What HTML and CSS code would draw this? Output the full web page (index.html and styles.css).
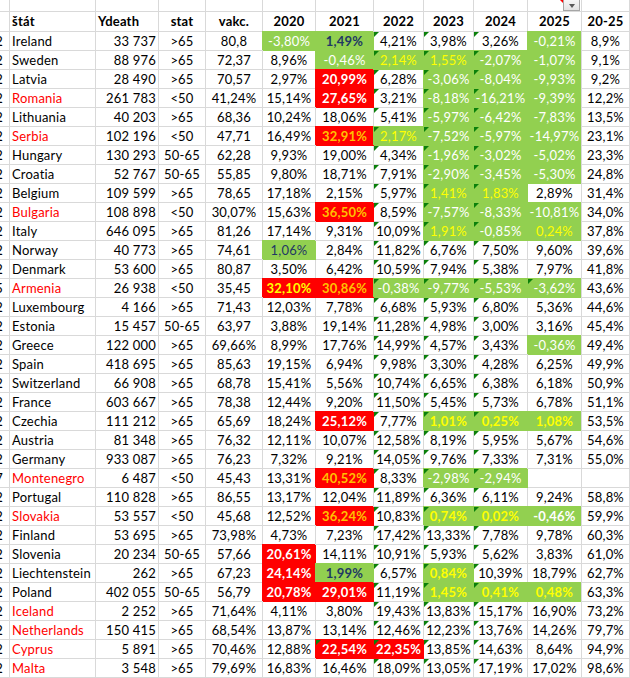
FILE: index.html
```html
<!DOCTYPE html>
<html lang="sk">
<head>
<meta charset="utf-8">
<title>Sheet</title>
<link rel="stylesheet" href="styles.css">
</head>
<body>
<div class="sheet">
<div></div><div></div><div></div><div></div><div></div><div></div><div></div><div></div><div></div><div></div><div></div><div></div>
<div class="hd"></div><div class="hd hl">štát</div><div class="hd hl">Ydeath</div><div class="hd">stat</div><div class="hd">vakc.</div><div class="hd">2020</div><div class="hd">2021</div><div class="hd">2022</div><div class="hd">2023</div><div class="hd">2024</div><div class="hd">2025</div><div class="hd">20-25</div>

<div>2</div><div>Ireland</div><div>33 737</div><div>&gt;65</div><div>80,8</div><div class="g w">-3,80%</div><div class="g n b">1,49%</div><div>4,21%</div><div>3,98%</div><div>3,26%</div><div class="g w">-0,21%</div><div>8,9%</div>
<div>2</div><div>Sweden</div><div>88 976</div><div>&gt;65</div><div>72,37</div><div>8,96%</div><div class="g w">-0,46%</div><div class="g y">2,14%</div><div class="g y">1,55%</div><div class="g w">-2,07%</div><div class="g w">-1,07%</div><div>9,1%</div>
<div>2</div><div>Latvia</div><div>28 490</div><div>&gt;65</div><div>70,57</div><div>2,97%</div><div class="r w b">20,99%</div><div>6,28%</div><div class="g w">-3,06%</div><div class="g w">-8,04%</div><div class="g w">-9,93%</div><div>9,2%</div>
<div>2</div><div class="rn">Romania</div><div>261 783</div><div>&lt;50</div><div>41,24%</div><div>15,14%</div><div class="r w b">27,65%</div><div>3,21%</div><div class="g w">-8,18%</div><div class="g w">-16,21%</div><div class="g w">-9,39%</div><div>12,2%</div>
<div>2</div><div>Lithuania</div><div>40 203</div><div>&gt;65</div><div>68,36</div><div>10,24%</div><div>18,06%</div><div>5,41%</div><div class="g w">-5,97%</div><div class="g w">-6,42%</div><div class="g w">-7,83%</div><div>13,5%</div>
<div>2</div><div class="rn">Serbia</div><div>102 196</div><div>&lt;50</div><div>47,71</div><div>16,49%</div><div class="r o b">32,91%</div><div class="g y">2,17%</div><div class="g w">-7,52%</div><div class="g w">-5,97%</div><div class="g w">-14,97%</div><div>23,1%</div>
<div>2</div><div>Hungary</div><div>130 293</div><div>50-65</div><div>62,28</div><div>9,93%</div><div>19,00%</div><div>4,34%</div><div class="g w">-1,96%</div><div class="g w">-3,02%</div><div class="g w">-5,02%</div><div>23,3%</div>
<div>2</div><div>Croatia</div><div>52 767</div><div>50-65</div><div>55,85</div><div>9,80%</div><div>18,71%</div><div>7,91%</div><div class="g w">-2,90%</div><div class="g w">-3,45%</div><div class="g w">-5,30%</div><div>24,8%</div>
<div>2</div><div>Belgium</div><div>109 599</div><div>&gt;65</div><div>78,65</div><div>17,18%</div><div>2,15%</div><div>5,97%</div><div class="g y">1,41%</div><div class="g y">1,83%</div><div>2,89%</div><div>31,4%</div>
<div>2</div><div class="rn">Bulgaria</div><div>108 898</div><div>&lt;50</div><div>30,07%</div><div>15,63%</div><div class="r o b">36,50%</div><div>8,59%</div><div class="g w">-7,57%</div><div class="g w">-8,33%</div><div class="g w">-10,81%</div><div>34,0%</div>
<div>2</div><div>Italy</div><div>646 095</div><div>&gt;65</div><div>81,26</div><div>17,14%</div><div>9,31%</div><div>10,09%</div><div class="g y">1,91%</div><div class="g w">-0,85%</div><div class="g y">0,24%</div><div>37,8%</div>
<div>2</div><div>Norway</div><div>40 773</div><div>&gt;65</div><div>74,61</div><div class="g n">1,06%</div><div>2,84%</div><div>11,82%</div><div>6,76%</div><div>7,50%</div><div>9,60%</div><div>39,6%</div>
<div>2</div><div>Denmark</div><div>53 600</div><div>&gt;65</div><div>80,87</div><div>3,50%</div><div>6,42%</div><div>10,59%</div><div>7,94%</div><div>5,38%</div><div>7,97%</div><div>41,8%</div>
<div>5</div><div class="rn">Armenia</div><div>26 938</div><div>&lt;50</div><div>35,45</div><div class="r y b">32,10%</div><div class="r o b">30,86%</div><div class="g w">-0,38%</div><div class="g w">-9,77%</div><div class="g w">-5,53%</div><div class="g w t">-3,62%</div><div>43,6%</div>
<div>2</div><div>Luxembourg</div><div>4 166</div><div>&gt;65</div><div>71,43</div><div>12,03%</div><div>7,78%</div><div>6,68%</div><div>5,93%</div><div>6,80%</div><div>5,36%</div><div>44,6%</div>
<div>2</div><div>Estonia</div><div>15 457</div><div>50-65</div><div>63,97</div><div>3,88%</div><div>19,14%</div><div>11,28%</div><div>4,98%</div><div>3,00%</div><div>3,16%</div><div>45,4%</div>
<div>2</div><div>Greece</div><div>122 000</div><div>&gt;65</div><div>69,66%</div><div>8,99%</div><div>17,76%</div><div>14,99%</div><div>4,57%</div><div>3,43%</div><div class="g w">-0,36%</div><div>49,4%</div>
<div>2</div><div>Spain</div><div>418 695</div><div>&gt;65</div><div>85,63</div><div>19,15%</div><div>6,94%</div><div>9,98%</div><div>3,30%</div><div>4,28%</div><div>6,25%</div><div>49,9%</div>
<div>2</div><div>Switzerland</div><div>66 908</div><div>&gt;65</div><div>68,78</div><div>15,41%</div><div>5,56%</div><div>10,74%</div><div>6,65%</div><div>6,38%</div><div>6,18%</div><div>50,9%</div>
<div>2</div><div>France</div><div>603 667</div><div>&gt;65</div><div>78,38</div><div>12,44%</div><div>9,20%</div><div>11,50%</div><div>5,45%</div><div>5,73%</div><div>6,78%</div><div>51,1%</div>
<div>2</div><div>Czechia</div><div>111 212</div><div>&gt;65</div><div>65,69</div><div>18,24%</div><div class="r w b">25,12%</div><div>7,77%</div><div class="g y b">1,01%</div><div class="g y b">0,25%</div><div class="g y b">1,08%</div><div>53,5%</div>
<div>2</div><div>Austria</div><div>81 348</div><div>&gt;65</div><div>76,32</div><div>12,11%</div><div>10,07%</div><div>12,58%</div><div>8,19%</div><div>5,95%</div><div>5,67%</div><div>54,6%</div>
<div>2</div><div>Germany</div><div>933 087</div><div>&gt;65</div><div>76,23</div><div>7,32%</div><div>9,21%</div><div>14,05%</div><div>9,76%</div><div>7,33%</div><div>7,31%</div><div>55,0%</div>
<div>7</div><div class="rn">Montenegro</div><div>6 487</div><div>&lt;50</div><div>45,43</div><div>13,31%</div><div class="r o b">40,52%</div><div>8,33%</div><div class="g w">-2,98%</div><div class="g w">-2,94%</div><div></div><div></div>
<div>2</div><div>Portugal</div><div>110 828</div><div>&gt;65</div><div>86,55</div><div>13,17%</div><div>12,04%</div><div>11,89%</div><div>6,36%</div><div>6,11%</div><div>9,24%</div><div>58,8%</div>
<div>2</div><div class="rn">Slovakia</div><div>53 557</div><div>&lt;50</div><div>45,68</div><div>12,52%</div><div class="r o b">36,24%</div><div>10,83%</div><div class="g y b">0,74%</div><div class="g y b">0,02%</div><div class="g w b">-0,46%</div><div>59,9%</div>
<div>2</div><div>Finland</div><div>53 695</div><div>&gt;65</div><div>73,98%</div><div>4,73%</div><div>7,23%</div><div>17,42%</div><div>13,33%</div><div>7,78%</div><div>9,78%</div><div>60,3%</div>
<div>2</div><div>Slovenia</div><div>20 234</div><div>50-65</div><div>57,66</div><div class="r w b">20,61%</div><div>14,11%</div><div>10,91%</div><div>5,93%</div><div>5,62%</div><div>3,83%</div><div>61,0%</div>
<div>2</div><div>Liechtenstein</div><div>262</div><div>&gt;65</div><div>67,23</div><div class="r w b">24,14%</div><div class="g n b">1,99%</div><div>6,57%</div><div class="g y b">0,84%</div><div>10,39%</div><div>18,79%</div><div>62,7%</div>
<div>2</div><div>Poland</div><div>402 055</div><div>50-65</div><div>56,79</div><div class="r w b">20,78%</div><div class="r w b">29,01%</div><div>11,19%</div><div class="g y b">1,45%</div><div class="g y b">0,41%</div><div class="g y b">0,48%</div><div>63,3%</div>
<div>2</div><div class="rn">Iceland</div><div>2 252</div><div>&gt;65</div><div>71,64%</div><div>4,11%</div><div>3,80%</div><div>19,43%</div><div>13,83%</div><div>15,17%</div><div>16,90%</div><div>73,2%</div>
<div>2</div><div class="rn">Netherlands</div><div>150 415</div><div>&gt;65</div><div>68,54%</div><div>13,87%</div><div>13,14%</div><div>12,46%</div><div>12,23%</div><div>13,76%</div><div>14,26%</div><div>79,7%</div>
<div>2</div><div class="rn">Cyprus</div><div>5 891</div><div>&gt;65</div><div>70,46%</div><div>12,88%</div><div class="r w b t">22,54%</div><div class="r w b">22,35%</div><div>13,85%</div><div>14,63%</div><div>8,64%</div><div>94,9%</div>
<div>2</div><div class="rn">Malta</div><div>3 548</div><div>&gt;65</div><div>79,69%</div><div>16,83%</div><div>16,46%</div><div>18,09%</div><div>13,05%</div><div>17,19%</div><div>17,02%</div><div>98,6%</div>
</div>
<div class="comment-mark"></div>
<div class="filter-btn"><span class="filter-arrow"></span></div>
</body>
</html>
```

FILE: styles.css
```css
html, body {
  margin: 0;
  padding: 0;
  background: #ffffff;
  overflow: hidden;
}

.sheet {
  display: grid;
  grid-template-columns: 10px 86px 63px 47px 57px 53px 58px 50px 50px 54px 54px 48px;
  grid-template-rows: 12px 20px repeat(34, 19px);
  width: 630px;
  font-family: Lato, "Open Sans", sans-serif;
  font-size: 13px;
  color: #000000;
}

.sheet > div {
  position: relative;
  box-sizing: border-box;
  border-right: 1px solid #d9d9d9;
  border-bottom: 1px solid #d9d9d9;
  white-space: nowrap;
  overflow: hidden;
  line-height: 18px;
  text-align: center;
  letter-spacing: 0.2px;
}

/* column A: clipped digit */
.sheet > div:nth-child(12n+1) {
  direction: rtl;
  text-align: right;
  padding-right: 6px;
  overflow: hidden;
}

/* country column */
.sheet > div:nth-child(12n+2) {
  text-align: left;
  padding-left: 2px;
  overflow: visible;
}

/* Ydeath column */
.sheet > div:nth-child(12n+3) {
  text-align: right;
  padding-right: 2px;
}

/* 20-25 column: gridline on its left side */
.sheet > div:nth-child(12n) {
  box-shadow: -1px 0 0 0 #d9d9d9;
}

/* header row */
.sheet > div.hd {
  font-weight: 700;
  line-height: 19px;
}
.sheet > div.hl {
  text-align: left;
  padding-left: 2px;
  padding-right: 0;
}

.rn { color: #ff0000; }

/* fills */
.sheet > div.g {
  background: #92d050;
  border-right-color: #92d050;
  border-bottom-color: #92d050;
  box-shadow: -1px -1px 0 0 #92d050;
}
.sheet > div.r {
  background: #ff0000;
  border-right-color: #ff0000;
  border-bottom-color: #ff0000;
  box-shadow: -1px -1px 0 0 #ff0000;
}

/* text colours */
.w { color: #ffffff; }
.y { color: #ffff00; }
.o { color: #ffc000; }
.n { color: #1f3864; }
.b { font-weight: 700; }

/* green error triangles */
.sheet > div:nth-child(12n+8):nth-child(n+25)::before,
.sheet > div:nth-child(12n+9):nth-child(n+25)::before,
.sheet > div:nth-child(12n+10):nth-child(n+25)::before,
.sheet > div.t::before {
  content: "";
  position: absolute;
  left: 0;
  top: 0;
  width: 0;
  height: 0;
  border-top: 5px solid #0b800b;
  border-right: 5px solid transparent;
}

/* top-right widgets */
.comment-mark {
  position: absolute;
  left: 560px;
  top: 0;
  width: 0;
  height: 0;
  border-top: 3px solid #ff0000;
  border-left: 3px solid transparent;
}

.filter-btn {
  position: absolute;
  left: 563px;
  top: -1px;
  width: 17px;
  height: 12px;
  box-sizing: border-box;
  border: 1px solid #a6a6a6;
  background: linear-gradient(#f7f7f7, #e3e3e3);
  display: flex;
  align-items: center;
  justify-content: center;
}

.filter-arrow {
  width: 0;
  height: 0;
  border-left: 3px solid transparent;
  border-right: 3px solid transparent;
  border-top: 4px solid #595959;
  margin-top: 1px;
}
```
